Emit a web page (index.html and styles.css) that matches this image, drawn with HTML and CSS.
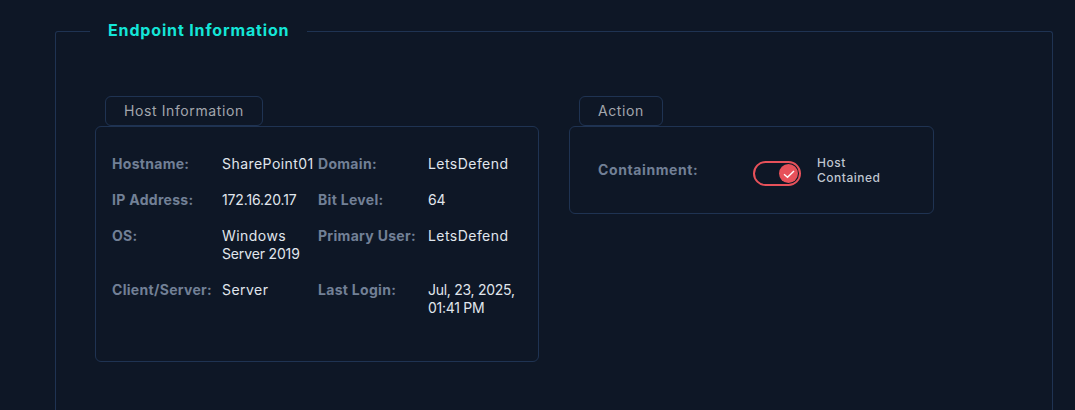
FILE: index.html
```html
<!DOCTYPE html>
<html lang="en">
<head>
    <meta charset="UTF-8">
    <title>Endpoint Information</title>
    <link rel="stylesheet" href="styles.css">
</head>
<body>
    <fieldset class="endpoint">
        <legend class="endpoint-title">Endpoint Information</legend>
        <div class="panels">
            <section class="panel panel-host">
                <div class="panel-tab">Host Information</div>
                <div class="panel-body host-grid">
                    <span class="label">Hostname:</span>
                    <span class="value">SharePoint01</span>
                    <span class="label">Domain:</span>
                    <span class="value">LetsDefend</span>

                    <span class="label">IP Address:</span>
                    <span class="value num">172.16.20.17</span>
                    <span class="label">Bit Level:</span>
                    <span class="value num">64</span>

                    <span class="label">OS:</span>
                    <span class="value">Windows<br><span class="num">Server 2019</span></span>
                    <span class="label">Primary User:</span>
                    <span class="value">LetsDefend</span>

                    <span class="label">Client/Server:</span>
                    <span class="value">Server</span>
                    <span class="label">Last Login:</span>
                    <span class="value date">Jul, 23, 2025,<br>01:41 PM</span>
                </div>
            </section>
            <section class="panel panel-action">
                <div class="panel-tab">Action</div>
                <div class="panel-body action-row">
                    <span class="label containment">Containment:</span>
                    <div class="toggle">
                        <span class="toggle-knob">
                            <svg width="12" height="10" viewBox="0 0 12 10"><path d="M1 5.2 L4.5 8.2 L11 2" fill="none" stroke="#fff" stroke-width="1.4"/></svg>
                        </span>
                    </div>
                    <span class="toggle-text">Host<br>Contained</span>
                </div>
            </section>
        </div>
    </fieldset>
</body>
</html>
```

FILE: styles.css
```css
body, html {
    margin: 0;
    padding: 0;
    height: 410px;
    overflow: hidden;
    font-family: Inter, "Noto Sans", sans-serif;
    background-color: #0e1726;
    color: #fff;
}

.endpoint {
    margin: 20px 22px 0 55px;
    padding: 54px 39px 0;
    height: 390px;
    border: 1px solid #1f3352;
    border-bottom: none;
    border-radius: 3px 3px 0 0;
    box-sizing: border-box;
}

.endpoint-title {
    margin-left: -5px;
    padding: 0 18px 2px;
    font-size: 16px;
    font-weight: 700;
    letter-spacing: .85px;
    line-height: 20px;
    color: #14e6d8;
}

.panels {
    display: flex;
    align-items: flex-start;
    gap: 30px;
}

.panel-host {
    width: 444px;
}

.panel-action {
    width: 365px;
}

.panel-tab {
    display: inline-block;
    margin-left: 10px;
    padding: 0 18px;
    height: 30px;
    line-height: 28px;
    font-size: 14px;
    letter-spacing: .6px;
    color: #a3a6ad;
    border: 1px solid #1f3352;
    border-radius: 6px;
    box-sizing: border-box;
    vertical-align: top;
}

.panel-host .panel-tab {
    width: 158px;
}

.panel-action .panel-tab {
    width: 84px;
}

.panel-body {
    border: 1px solid #1f3352;
    border-radius: 6px;
    box-sizing: border-box;
}

.host-grid {
    display: grid;
    grid-template-columns: 110px 96px 110px 1fr;
    row-gap: 18px;
    height: 236px;
    padding: 28px 16px;
    align-content: start;
    font-size: 14px;
    line-height: 18px;
}

.label {
    font-weight: 700;
    font-size: 14px;
    letter-spacing: .3px;
    color: #728096;
    white-space: nowrap;
}

.value {
    color: #e0e6ed;
    letter-spacing: .45px;
    white-space: nowrap;
}

.value.num, .value .num {
    letter-spacing: -.15px;
}

.value.date {
    letter-spacing: -.28px;
}

.action-row {
    display: flex;
    align-items: center;
    height: 88px;
    padding: 0 28px;
}

.containment {
    width: 155px;
    line-height: 18px;
    letter-spacing: .6px;
}

.toggle {
    display: flex;
    align-items: center;
    justify-content: flex-end;
    width: 48px;
    height: 25px;
    margin-top: 7px;
    padding-right: 1px;
    border: 2px solid #e7515a;
    border-radius: 13px;
    box-sizing: border-box;
}

.toggle-knob {
    display: flex;
    align-items: center;
    justify-content: center;
    width: 19px;
    height: 19px;
    border-radius: 50%;
    background: #e7515a;
}

.toggle-text {
    margin-left: 16px;
    font-size: 12px;
    font-weight: 500;
    letter-spacing: .5px;
    line-height: 15px;
    color: #bfc5cf;
}
```
